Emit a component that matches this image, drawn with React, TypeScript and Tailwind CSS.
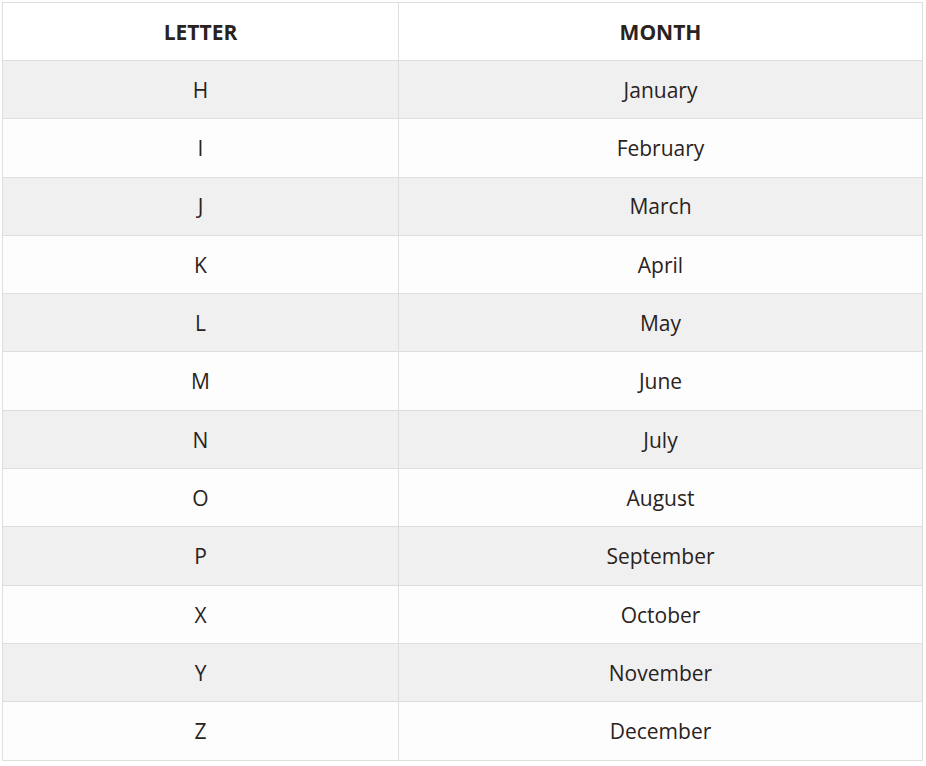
const rows = [
  ['H', 'January'],
  ['I', 'February'],
  ['J', 'March'],
  ['K', 'April'],
  ['L', 'May'],
  ['M', 'June'],
  ['N', 'July'],
  ['O', 'August'],
  ['P', 'September'],
  ['X', 'October'],
  ['Y', 'November'],
  ['Z', 'December'],
];

export default function App() {
  return (
    <div className="min-h-screen bg-white pt-[2px] pl-[2px] font-['Open_Sans',sans-serif] text-[#2a221d]">
      <table className="w-[921px] border-collapse table-fixed text-center text-[21px]">
        <colgroup>
          <col className="w-[396px]" />
          <col />
        </colgroup>
        <thead>
          <tr className="h-[58px] bg-white">
            <th className="border border-[#dedede] pt-[2px] font-bold">LETTER</th>
            <th className="border border-[#dedede] pt-[2px] font-bold">MONTH</th>
          </tr>
        </thead>
        <tbody>
          {rows.map(([letter, month], i) => (
            <tr key={letter} className={i % 2 === 0 ? 'h-[58.3px] bg-[#f0f0f0]' : 'h-[58.3px] bg-[#fdfdfd]'}>
              <td className="border border-[#dedede] pt-[2px]">{letter}</td>
              <td className="border border-[#dedede] pt-[2px]">{month}</td>
            </tr>
          ))}
        </tbody>
      </table>
    </div>
  );
}
